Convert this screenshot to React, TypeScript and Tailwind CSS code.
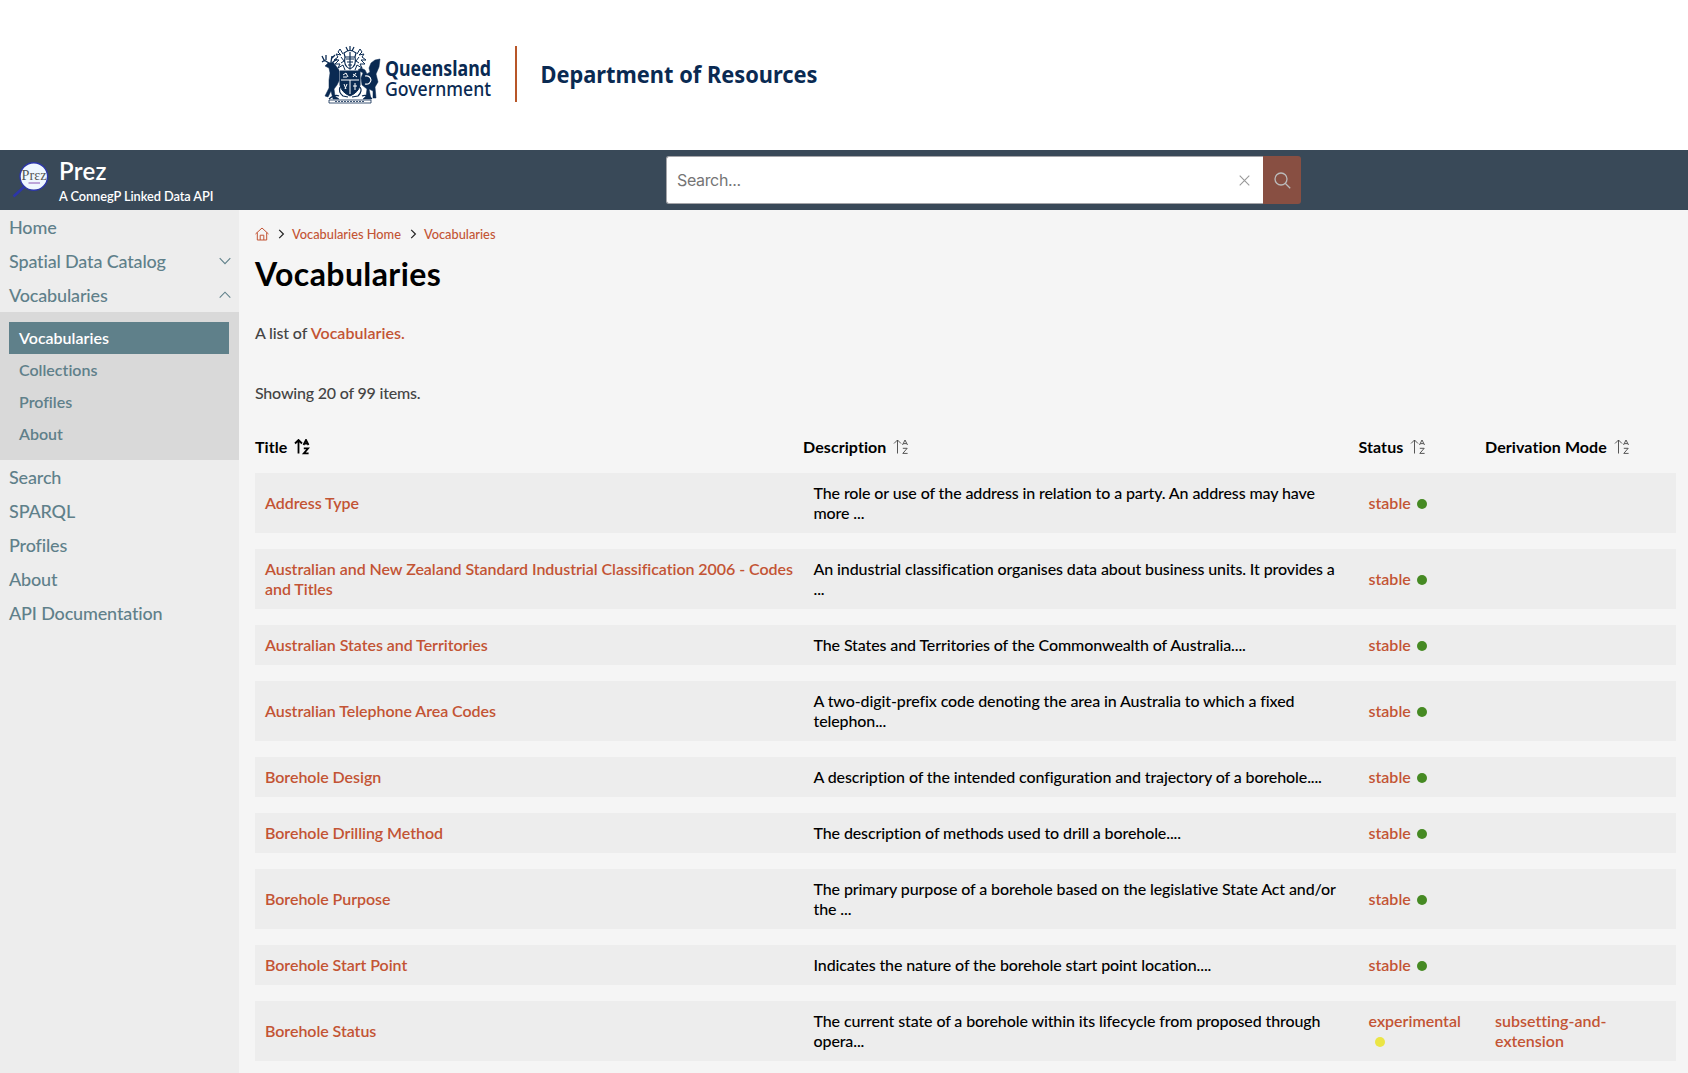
import React from "react";

const NAVY = "#0a2a52";

function Crest() {
  return (
    <svg className="mt-px shrink-0" width="60" height="58" viewBox="0 0 60 58" fill="none" stroke={NAVY} strokeWidth="1">
      {/* supporters: red deer and brolga */}
      <path fill={NAVY} strokeWidth=".5" d="M7 17 L12 16 L15 20 L18 24 L18 35 L16 39 L13 43 L14 50 L18 53 L12 53 L10 45 L7 51 L4 50 L8 42 L8 34 L9 27 L8 22 L4 20 Z" />
      <path strokeWidth="1.3" d="M8 17 L3 14 L1 10 M4 14 L1 16 M5 14 L5 9 M10 16 L11 10 M10 13 L14 9 M12 16 L16 13" />
      <path fill={NAVY} strokeWidth=".5" d="M59 13 L54 14 L50 17 L48 22 L49 26 L46 28 L44 24 L40 22 L37 24 L42 27 L40 32 L41 39 L46 43 L45 50 L42 53 L50 53 L48 43 L52 45 L52 52 L55 52 L54 41 L57 36 L55 28 L58 21 Z" />
      <path stroke="#fff" strokeWidth="1.2" d="M44 30 Q49 29 50 34 Q49 39 44 38" />
      {/* helmet, mantling and sugar cane */}
      <path strokeWidth="1.2" d="M29 0 V4 M25 1 L27 5 M33 1 L31 5 M23 7 Q29 2 35 7 L34 11 H24 Z M24 11 Q22 20 29 23 Q36 20 34 11 M25 13 H33 M26 16 H32 M27 19 H31 M29 6 V22" />
      <path d="M22 8 L19 3 L17 6 L20 9 L15 8 L17 11 L13 14 L18 14 L14 18 L19 18 L17 22 L22 19 L24 24 M36 8 L39 3 L41 6 L38 9 L43 8 L41 11 L45 14 L40 14 L44 18 L39 18 L41 22 L36 19 L34 24 M20 11 L23 15 L20 17 M38 11 L35 15 L38 17" />
      {/* shield */}
      <path fill={NAVY} d="M19 25 H39 V39 Q38 46 29 50 Q20 46 19 39 Z" />
      <path stroke="#fff" strokeWidth="1" d="M20 34 H38 M29 34 V48 M22 29 L25 27 L27 31 M22 31 H26 M32 28 L36 31 M32 31 L35 27 M23 38 L25 43 M26 38 L24 43 M32 40 H36 M34 37 V44" />
      <path strokeWidth="1.2" d="M19 41 Q17 46 22 50 L27 51 M39 41 Q42 45 37 50 L31 51 M8 53 Q14 48 18 50 M41 50 Q46 48 51 53" />
      <path fill="#fff" strokeWidth=".8" d="M8 54 H50 V57 H8 Z" />
      <path strokeWidth=".8" strokeDasharray="2 1" d="M14 55.5 H44" />
    </svg>
  );
}

function PrezLogo() {
  return (
    <svg className="mt-1 shrink-0" width="38" height="38" viewBox="0 0 38 38">
      <path d="M13 25 L1.5 35.5" stroke="#2c36a8" strokeWidth="2.6" />
      <circle cx="21.8" cy="15.5" r="13.8" fill="#eff7ff" stroke="#2c36a8" strokeWidth="1.4" />
      <text x="9.5" y="18.5" fontSize="15" textLength="25" lengthAdjust="spacingAndGlyphs" fill="#565656" fontFamily="Liberation Serif, serif">Prεz</text>
      <path d="M16.5 22 H28" stroke="#8a55b5" strokeWidth="1" />
    </svg>
  );
}

const AZ_SHAPE = (
  <>
    <path d="M4.5 14.5 V1 M1 4.5 L4.5 1 L8 4.5" />
    <path d="M9.5 6 L12 1 L14.5 6 M10.4 4.6 H13.6 M9.8 9.3 H14.2 L9.8 14.4 H14.6" />
  </>
);

function SortIcon({ active }: { active?: boolean }) {
  return active ? (
    <svg className="ml-[7px]" width="16" height="16" viewBox="0 0 16 16" fill="none" stroke="#000" strokeWidth="1.8">{AZ_SHAPE}</svg>
  ) : (
    <svg className="ml-[7px]" width="16" height="16" viewBox="0 0 16 16" fill="none" stroke="#444" strokeWidth="0.9">{AZ_SHAPE}</svg>
  );
}

function Chevron({ up }: { up?: boolean }) {
  return (
    <svg width="12" height="8" viewBox="0 0 12 8" fill="none" stroke="#5f808a" strokeWidth="1.1">
      <path d={up ? "M.7 6.6 L6 1.2 L11.3 6.6" : "M.7 1.2 L6 6.6 L11.3 1.2"} />
    </svg>
  );
}

function Crumb() {
  return (
    <svg className="mr-[7px] ml-[9px]" width="7" height="10" viewBox="0 0 7 10" fill="none" stroke="#222" strokeWidth="1.2">
      <path d="M1.2 .8 L5.4 5 L1.2 9.2" />
    </svg>
  );
}

type Row = { title: string; desc: string; status?: string; mode?: string };
const rows: Row[] = [
  { title: "Address Type", desc: "The role or use of the address in relation to a party. An address may have more ..." },
  { title: "Australian and New Zealand Standard Industrial Classification 2006 - Codes and Titles", desc: "An industrial classification organises data about business units. It provides a ..." },
  { title: "Australian States and Territories", desc: "The States and Territories of the Commonwealth of Australia...." },
  { title: "Australian Telephone Area Codes", desc: "A two-digit-prefix code denoting the area in Australia to which a fixed telephon..." },
  { title: "Borehole Design", desc: "A description of the intended configuration and trajectory of a borehole...." },
  { title: "Borehole Drilling Method", desc: "The description of methods used to drill a borehole...." },
  { title: "Borehole Purpose", desc: "The primary purpose of a borehole based on the legislative State Act and/or the ..." },
  { title: "Borehole Start Point", desc: "Indicates the nature of the borehole start point location...." },
  { title: "Borehole Status", desc: "The current state of a borehole within its lifecycle from proposed through opera...", status: "experimental", mode: "subsetting-and-extension" },
];

function NavItem({ label, chevron }: { label: string; chevron?: "up" | "down" }) {
  return (
    <a className="flex h-[34px] items-center justify-between pr-[8.5px] pl-[9px] text-[18px] tracking-[-0.16px] text-[#5f808a]">
      {label}
      {chevron && <Chevron up={chevron === "up"} />}
    </a>
  );
}

export default function App() {
  return (
    <div className="flex h-[1073px] w-full flex-col overflow-hidden bg-[#f5f5f5] font-['Lato',sans-serif] font-medium text-black [font-variant-ligatures:none]">
      <header className="flex h-[150px] shrink-0 items-center bg-white pb-[2px] pl-[321px] text-[#0a2a52]">
        <Crest />
        <svg className="ml-1 shrink-0 overflow-visible" width="108" height="56" viewBox="0 0 108 56" fill={NAVY} fontFamily="Noto Sans, sans-serif">
          <text x="0" y="30" fontSize="20.5" fontWeight="700" textLength="106" lengthAdjust="spacingAndGlyphs">Queensland</text>
          <text x="0" y="50" fontSize="19" textLength="106" lengthAdjust="spacingAndGlyphs">Government</text>
        </svg>
        <div className="ml-[22px] h-14 w-[2px] bg-[#b85628]" />
        <svg className="ml-[23px] overflow-visible" width="280" height="40" viewBox="0 0 280 40" fill={NAVY} fontFamily="Noto Sans, sans-serif">
          <text x="0.5" y="29" fontSize="24" fontWeight="700" textLength="277" lengthAdjust="spacingAndGlyphs">Department of Resources</text>
        </svg>
      </header>

      <div className="flex h-[60px] shrink-0 items-center bg-[#394958] text-white">
        <div className="flex w-[666px] pt-[2px] pl-3">
          <PrezLogo />
          <div className="ml-[9px]">
            <div className="text-[24px] leading-[28px] font-semibold tracking-[0.3px]">Prez</div>
            <div className="mt-[2px] text-[12.8px] leading-[18px] font-semibold tracking-[-0.07px]">A ConnegP Linked Data API</div>
          </div>
        </div>
        <div className="flex h-12 w-[635px]">
          <div className="flex flex-1 items-center justify-between rounded-l-[3px] border border-r-0 border-[#a5a5a9] bg-white pr-[13px] pl-[10px] font-['Inter',sans-serif] text-[16px] font-normal tracking-[-0.35px] text-[#757575]">
            Search...
            <svg width="11" height="11" viewBox="0 0 11 11" stroke="#999" strokeWidth="1.1"><path d="M.7 .7 L10.3 10.3 M10.3 .7 L.7 10.3" /></svg>
          </div>
          <button className="flex w-[38px] items-center justify-center rounded-r-[3px] bg-[#884f42]">
            <svg width="17" height="17" viewBox="0 0 17 17" fill="none" stroke="#bbb" strokeWidth="1.3"><circle cx="7" cy="7" r="6" /><path d="M11.2 11.2 L16.2 16.2" /></svg>
          </button>
        </div>
      </div>

      <div className="flex min-h-0 flex-1">
        <nav className="w-[239px] shrink-0 bg-[#ededed]">
          <NavItem label="Home" />
          <NavItem label="Spatial Data Catalog" chevron="down" />
          <NavItem label="Vocabularies" chevron="up" />
          <div className="h-[148px] bg-[#d9d9d9] pt-[10px] pr-[10px] pl-[9px] text-[16px] font-semibold text-[#5f808a]">
            <div className="flex h-8 items-center bg-[#5f808a] pl-[10px] text-white">Vocabularies</div>
            <div className="flex h-8 items-center pl-[10px]">Collections</div>
            <div className="flex h-8 items-center pl-[10px]">Profiles</div>
            <div className="flex h-8 items-center pl-[10px]">About</div>
          </div>
          <NavItem label="Search" />
          <NavItem label="SPARQL" />
          <NavItem label="Profiles" />
          <NavItem label="About" />
          <NavItem label="API Documentation" />
        </nav>

        <main className="min-w-0 flex-1 pr-3 pl-4 text-[16px] leading-[20px]">
          <div className="mt-4 flex h-4 items-center text-[12.8px] text-[#c35434]">
            <svg width="14" height="14" viewBox="0 0 14 14" fill="none" stroke="#c35434" strokeWidth="1"><path d="M.5 7 L7 1 L13.5 7 M2.3 5.5 V13 H11.7 V5.5 M5.2 13 V8.2 H8.8 V13" /></svg>
            <Crumb />Vocabularies Home<Crumb />Vocabularies
          </div>
          <h1 className="mt-3 text-[32px] leading-[40px] font-bold tracking-[0.4px]">Vocabularies</h1>
          <p className="mt-[29px] tracking-[-0.15px] text-[#444]">A list of <span className="font-semibold tracking-[0.03px] text-[#c35434]">Vocabularies.</span></p>
          <p className="mt-10 tracking-[-0.2px] text-[#444]">Showing 20 of 99 items.</p>
          <div className="mt-[34px] grid h-5 grid-cols-[548px_555.5px_126.5px_1fr] font-bold tracking-[0.08px]">
            <div className="flex items-center">Title <SortIcon active /></div>
            <div className="flex items-center">Description <SortIcon /></div>
            <div className="flex items-center">Status <SortIcon /></div>
            <div className="flex items-center">Derivation Mode <SortIcon /></div>
          </div>
          <div className="mt-4 flex flex-col gap-4">
            {rows.map((r) => (
              <div key={r.title} className="grid grid-cols-[548px_555.5px_126.5px_1fr] items-center bg-[#ededed] py-[10px] font-semibold text-[#c35434]">
                <div className="pr-[8px] pl-[10px] tracking-[-0.05px]">{r.title}</div>
                <div className="pr-[14px] pl-[10.5px] font-medium tracking-[-0.11px] text-black">{r.desc}</div>
                <div className="pr-[10px] pl-[10px]">
                  {r.status ?? "stable"}
                  <span className={r.status ? "ml-[6px] inline-block size-[10px] rounded-full bg-[#ebe545]" : "ml-[6px] inline-block size-[10px] rounded-full bg-[#468a23]"} />
                </div>
                <div className="w-[150px] pl-[10px]">{r.mode}</div>
              </div>
            ))}
          </div>
        </main>
      </div>
    </div>
  );
}
